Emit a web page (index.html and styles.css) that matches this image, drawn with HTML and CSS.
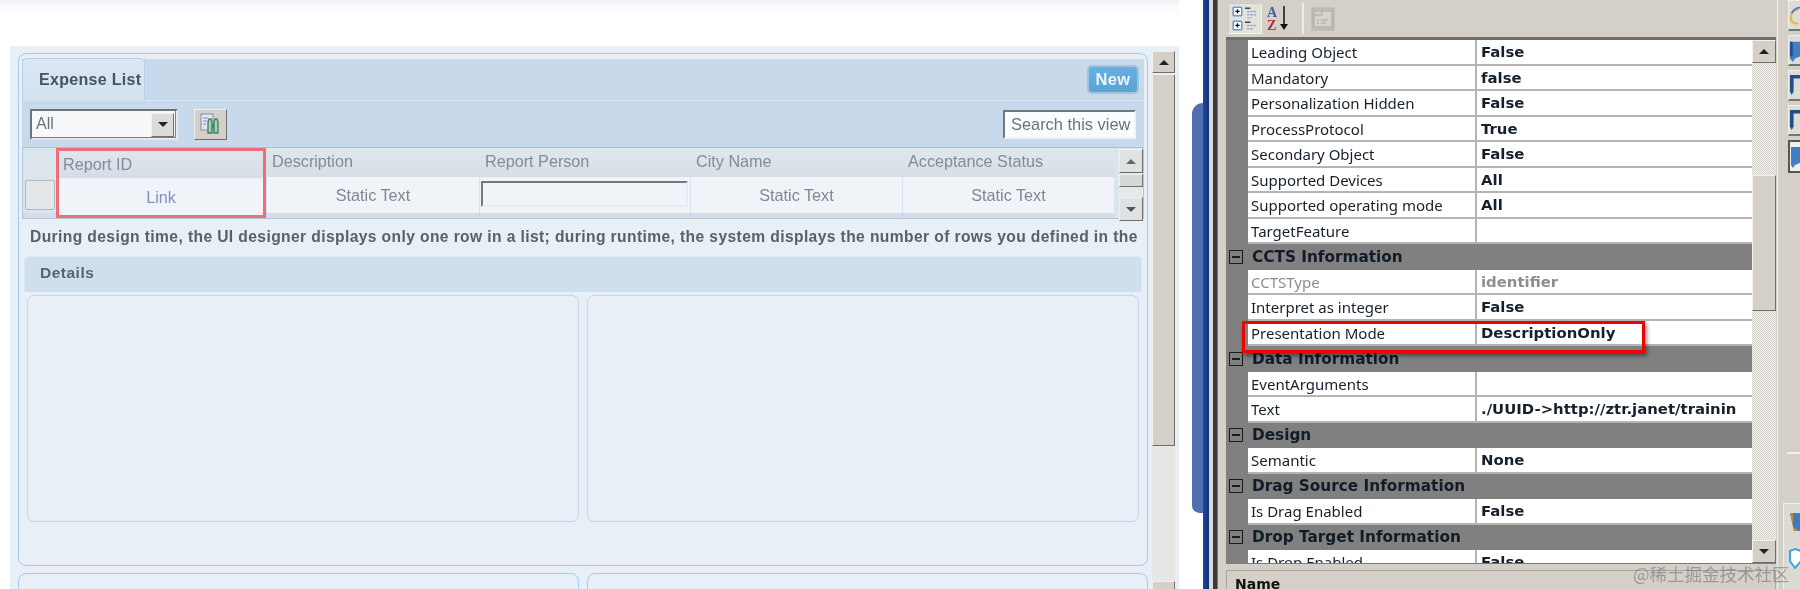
FILE: index.html
```html
<!DOCTYPE html>
<html lang="en">
<head>
<meta charset="utf-8">
<title>Expense List designer</title>
<link rel="stylesheet" href="styles.css">
</head>
<body>
<div class="app">
  <main class="left">
    <div class="canvas">
      <div class="forms">
        <section class="panel">
          <div class="head">
            <div class="tab">Expense List</div>
            <div class="new">New</div>
          </div>
          <div class="toolbar">
            <div class="select"><span class="select-value">All</span><span class="btn drop"><i class="tri-down"></i></span></div>
            <div class="btn find">
              <svg width="25" height="25" viewBox="0 0 25 25">
                <rect x="3" y="2" width="12" height="16" fill="#dfe7f2" stroke="#7f8ea3"/>
                <path d="M5 6h5M5 9h4M5 12h3" stroke="#6f93c4" stroke-width="1.2"/>
                <path d="M10 10l1-3h2l1 3v11h-4zM16 10l1-3h2l1 3v11h-4z" fill="#a9cdb6" stroke="#3d8062" stroke-width="1.3"/>
                <path d="M14 12h2v4h-2z" fill="#3d8062"/>
              </svg>
            </div>
            <div class="search">Search this view</div>
          </div>
          <div class="table">
            <div class="col col-row"><div class="th"></div><div class="td"><span class="rowbtn"></span></div><div class="tf"></div></div>
            <div class="col col-id"><div class="th">Report ID</div><div class="td link">Link</div></div>
            <div class="col col-d"><div class="th">Description</div><div class="td">Static Text</div><div class="tf"></div></div>
            <div class="col col-p"><div class="th">Report Person</div><div class="td"><span class="input"></span></div><div class="tf"></div></div>
            <div class="col col-c"><div class="th">City Name</div><div class="td">Static Text</div><div class="tf"></div></div>
            <div class="col col-a"><div class="th">Acceptance Status</div><div class="td">Static Text</div><div class="tf"></div></div>
            <div class="mini-scroll">
              <span class="btn mini"><i class="tri-up small"></i></span>
              <span class="btn mini-thumb"></span>
              <span class="mini-track"></span>
              <span class="btn mini"><i class="tri-down small"></i></span>
            </div>
          </div>
          <p class="note">During design time, the UI designer displays only one row in a list; during runtime, the system displays the number of rows you defined in the</p>
          <div class="details">Details</div>
          <div class="boxes"><div class="box"></div><div class="box"></div></div>
        </section>
        <div class="lower"><div class="lower-box"></div><div class="lower-box"></div></div>
      </div>
      <div class="vscroll">
        <span class="btn vbtn"><i class="tri-up"></i></span>
        <span class="btn vthumb"></span>
        <span class="vtrack"></span>
        <span class="btn vbtn"></span>
      </div>
    </div>
  </main>

  <div class="gutter"><div class="bluetab"></div></div>
  <div class="rail"></div>
  <div class="sash"></div>

  <aside class="props">
    <div class="props-bar">
      <div class="tool tool-on">
        <svg width="28" height="28" viewBox="0 0 26 26">
          <rect x="2" y="2" width="8" height="8" rx="1" fill="#fff" stroke="#5a9bd8" stroke-width="1.4"/>
          <rect x="2" y="15" width="8" height="8" rx="1" fill="#fff" stroke="#5a9bd8" stroke-width="1.4"/>
          <path d="M4 6h4M6 4v4M4 19h4M6 17v4" stroke="#111" stroke-width="1.2"/>
          <path d="M13 3h5M13 16h5" stroke="#444" stroke-width="1.3"/>
          <path d="M15 6h8M15 9h8M15 12h4M15 19h8M15 22h6" stroke="#8aa6cc" stroke-width="1.3" stroke-dasharray="2 1"/>
        </svg>
      </div>
      <div class="tool tool-az">
        <svg width="24" height="26" viewBox="0 0 24 26">
          <text x="1" y="11" class="az-a">A</text>
          <text x="1" y="24" class="az-z">Z</text>
          <path d="M18 0v20" stroke="#111" stroke-width="1.5"/>
          <path d="M14 18h8l-4 6z" fill="#111"/>
        </svg>
      </div>
      <div class="tool-sep"></div>
      <div class="tool tool-off">
        <svg width="24" height="24" viewBox="0 0 24 24">
          <rect x="1" y="1" width="22" height="22" fill="#c3c0b9" stroke="#b3b0a9"/>
          <rect x="3" y="4" width="18" height="16" fill="#d6d3cc" stroke="#a9a69f"/>
          <path d="M3 8h8v-4M6 13h2M10 13h7M6 16h2M10 16h5" stroke="#a9a69f" fill="none"/>
        </svg>
      </div>
    </div>
    <div class="grid-wrap">
      <div class="grid">
        <div class="row"><span class="k">Leading Object</span><span class="v">False</span></div>
        <div class="row"><span class="k">Mandatory</span><span class="v">false</span></div>
        <div class="row"><span class="k">Personalization Hidden</span><span class="v">False</span></div>
        <div class="row"><span class="k">ProcessProtocol</span><span class="v">True</span></div>
        <div class="row"><span class="k">Secondary Object</span><span class="v">False</span></div>
        <div class="row"><span class="k">Supported Devices</span><span class="v">All</span></div>
        <div class="row"><span class="k">Supported operating mode</span><span class="v">All</span></div>
        <div class="row"><span class="k">TargetFeature</span><span class="v"></span></div>
        <div class="sect"><i class="minus"></i>CCTS Information</div>
        <div class="row row-dim"><span class="k">CCTSType</span><span class="v">identifier</span></div>
        <div class="row"><span class="k">Interpret as integer</span><span class="v">False</span></div>
        <div class="row"><span class="k">Presentation Mode</span><span class="v">DescriptionOnly</span></div>
        <div class="sect"><i class="minus"></i>Data Information</div>
        <div class="row"><span class="k">EventArguments</span><span class="v"></span></div>
        <div class="row"><span class="k">Text</span><span class="v">./UUID-&gt;http://ztr.janet/trainin</span></div>
        <div class="sect"><i class="minus"></i>Design</div>
        <div class="row"><span class="k">Semantic</span><span class="v">None</span></div>
        <div class="sect"><i class="minus"></i>Drag Source Information</div>
        <div class="row"><span class="k">Is Drag Enabled</span><span class="v">False</span></div>
        <div class="sect"><i class="minus"></i>Drop Target Information</div>
        <div class="row"><span class="k">Is Drop Enabled</span><span class="v">False</span></div>
      </div>
      <div class="pscroll">
        <span class="btn pbtn"><i class="tri-up"></i></span>
        <span class="ptrack ptrack-a"></span>
        <span class="btn pthumb"></span>
        <span class="ptrack ptrack-b"></span>
        <span class="btn pbtn"><i class="tri-down"></i></span>
      </div>
      <div class="redbox"></div>
    </div>
    <div class="name-panel">Name</div>
  </aside>

  <div class="dock">
    <div class="dock-btn">
      <svg width="12" height="30" viewBox="0 0 12 30"><path d="M10 9C4 9 2 14 2 18s3 7 8 6" fill="none" stroke="#e8b93a" stroke-width="2.5"/><path d="M3 13c3-5 6-6 9-6" fill="none" stroke="#3a7fd0" stroke-width="2"/></svg>
    </div>
    <div class="dock-btn">
      <svg width="12" height="30" viewBox="0 0 12 30"><path d="M1 6h11v16l-5 2-3 4-3-4z" fill="#3f7fc6"/><path d="M1 6h3v16H1z" fill="#1f4f8f"/></svg>
    </div>
    <div class="dock-btn">
      <svg width="12" height="30" viewBox="0 0 12 30"><path d="M1 4h11v4H5v14l-2 4-2-4z" fill="#214f86"/></svg>
    </div>
    <div class="dock-btn">
      <svg width="12" height="30" viewBox="0 0 12 30"><path d="M1 4h11v4H5v14l-2 4-2-4z" fill="#214f86"/></svg>
    </div>
    <div class="dock-btn dock-on">
      <svg width="10" height="28" viewBox="0 0 10 28"><path d="M1 4h9v16l-5 2-2 3-2-3z" fill="#3f7fc6"/></svg>
    </div>
    <div class="dock-rule"></div>
    <div class="dock-lower">
      <svg width="12" height="22" viewBox="0 0 12 22"><path d="M1 3h11v18H5z" fill="#3d7cc4"/><path d="M1 3h3v14l6 4H5z" fill="#b98f3c"/></svg>
      <svg width="12" height="22" viewBox="0 0 12 22"><path d="M6 2l6 2v10l-6 7-5-7V4z" fill="#fff" stroke="#39a8e0" stroke-width="2"/></svg>
    </div>
  </div>

  <div class="watermark">@稀土掘金技术社区</div>
</div>
</body>
</html>
```

FILE: styles.css
```css
* { box-sizing: border-box; }
html, body { margin: 0; padding: 0; }
body { width: 1800px; height: 589px; overflow: hidden; background: #fff; font-family: "Liberation Sans", Arial, sans-serif; }
.app { position: relative; display: flex; width: 1800px; height: 589px; overflow: hidden; filter: blur(0.45px); }

/* left pane */
.left { width: 1179px; height: 589px; padding: 46px 0 0 10px; background: linear-gradient(#f1f2f6 0, #fafbfd 8px, #fff 16px); }
.canvas { display: flex; width: 1169px; height: 543px; padding: 5px 0 0 8px; background: #e8eff6; overflow: hidden; }
.forms { width: 1130px; margin-top: 2px; flex: none; }
.panel { width: 1130px; height: 513px; padding: 5px 3px 0; border: 1px solid #a9c9e8; border-radius: 8px; }

.head { display: flex; justify-content: space-between; height: 42px; padding-right: 4px; background: #c7d9ea; border-bottom: 1px solid #dbe7f2; }
.tab { width: 123px; height: 43px; margin-top: -1px; padding: 0 0 0 16px; border: 1px solid #b9d0e6; border-bottom: 0; border-radius: 5px 5px 0 0; background: linear-gradient(#dbe7f2, #d3e2ef); color: #46545f; font-size: 16px; font-weight: 700; letter-spacing: 0.3px; line-height: 42px; white-space: nowrap; }
.new { width: 52px; height: 29px; margin-top: 6px; margin-right: 1px; border: 2px solid #9fc4de; border-radius: 5px; background: linear-gradient(#68b0de, #58a4d4); color: #eaf5fc; font-size: 16.5px; font-weight: 700; letter-spacing: 0.4px; line-height: 24px; text-align: center; }

.toolbar { display: flex; align-items: center; height: 46px; padding: 0 8px; background: #c7d9ea; }
.select { display: flex; width: 148px; height: 31px; padding: 2px; border: 2px solid #6f7274; border-right-color: #e3e9ef; border-bottom-color: #e3e9ef; background: #f6f8fa; box-shadow: inset -1px -1px 0 #808080; }
.select-value { flex: 1; padding-left: 2px; color: #69727c; font-size: 16px; line-height: 22px; }
.btn { display: flex; align-items: center; justify-content: center; background: #d4d0c8; border: 1px solid; border-color: #f2f1ee #6e6e6c #6e6e6c #f2f1ee; }
.drop { width: 23px; height: 24px; background: #dcdcda; }
.find { width: 33px; height: 31px; margin-left: 16px; }
.search { width: 133px; height: 29px; margin-left: auto; padding-left: 6px; border: 2px solid #757779; border-right-color: #eef2f6; border-bottom-color: #eef2f6; background: #fbfcfd; color: #69727c; font-size: 16.4px; line-height: 24px; white-space: nowrap; overflow: hidden; }

.tri-down, .tri-up { display: block; width: 0; height: 0; border-left: 5px solid transparent; border-right: 5px solid transparent; }
.tri-down { border-top: 5px solid #222; }
.tri-up { border-bottom: 5px solid #222; }
.tri-down.small { border-top-color: #555; }
.tri-up.small { border-bottom-color: #666; }

.table { display: flex; height: 72px; padding-top: 1px; background: #dce4ec; border: 1px solid #b3c8dc; border-top-color: #a9c0d6; }
.col { display: flex; flex-direction: column; flex: none; }
.col-row { width: 33px; }
.col-id { width: 210px; border: 3px solid #ee6e78; margin-top: -1px; }
.col-d { width: 213px; }
.col-p { width: 211px; }
.col-c { width: 212px; }
.col-a { width: 212px; }
.th { height: 28px; padding-left: 6px; background: linear-gradient(#e0e6ec, #d6dfe7); color: #838b94; font-size: 16.2px; line-height: 25px; white-space: nowrap; }
.td { height: 36px; background: #f0f4f9; border-left: 1px solid #d7e1ec; color: #7f878f; font-size: 16.2px; line-height: 36px; text-align: center; }
.tf { flex: 1; background: #d5dee8; border-left: 1px solid #c8d5e3; }
.col-row .td { display: flex; align-items: center; padding-left: 2px; background: #dce4ec; border: 0; }
.col-row .th { background: #dce4ec; }
.rowbtn { width: 30px; height: 30px; background: #e3e7ea; border: 1px solid #aeb9c3; border-radius: 2px; }
.col-id .th { height: 27px; padding-left: 4px; background: linear-gradient(#e0e6ec, #d4dde6); line-height: 26px; }
.col-id .td { flex: 1; height: auto; border: 0; padding-top: 1px; }
.link { color: #8390c4 !important; }
.td .input { display: block; width: 207px; height: 26px; margin: 4px 0 0 1px; border: 2px solid #74787c; border-right-color: #e6edf4; border-bottom-color: #e6edf4; background: #f0f4f9; }

.mini-scroll { display: flex; flex-direction: column; width: 25px; margin-left: 5px; background: #dfe4ea; }
.mini { height: 24px; flex: none; background: #dfe1e2; }
.mini-thumb { height: 13px; flex: none; margin-top: 1px; background: #d6d8d8; }
.mini-track { height: 10px; flex: none; background: #e4e8ec; }
.mini-scroll .mini:last-child { height: 24px; }

.note { width: 1107px; height: 37px; margin: 0 0 0 8px; color: #5a6068; font-size: 15.6px; font-weight: 700; letter-spacing: 0.4px; line-height: 35px; white-space: nowrap; overflow: hidden; }
.details { height: 36px; margin: 0 2px; padding-left: 15px; border: 1px solid #dbe7f2; border-bottom: 0; border-radius: 5px 5px 0 0; background: #cfdfee; color: #56646f; font-size: 15.5px; font-weight: 700; letter-spacing: 0.5px; line-height: 31px; }
.boxes { display: flex; gap: 8px; margin: 3px 5px 0; }
.box { flex: 1; height: 227px; border: 1px solid #c0d7ed; border-radius: 7px; }
.lower { display: flex; gap: 8px; margin-top: 7px; }
.lower-box { flex: 1; height: 60px; border: 1px solid #a9c9e8; border-radius: 8px; }

.vscroll { display: flex; flex-direction: column; width: 23px; height: 560px; margin-left: 4px; flex: none; }
.vbtn { height: 22px; flex: none; }
.vthumb { height: 371px; flex: none; margin-top: 2px; border-top: 0; }
.vtrack { height: 135px; flex: none; background: #e6e6e4; }

/* splitter */
.gutter { width: 24px; flex: none; padding: 103px 0 0 13px; background: #fff; }
.bluetab { width: 11px; height: 410px; border-radius: 12px 0 0 8px; background: #4f6fb0; }
.rail { width: 6px; flex: none; margin-left: 0; background: linear-gradient(90deg, #1f4a96, #0f2f7c); }
.sash { width: 9px; flex: none; background: linear-gradient(90deg, #dcdad4 0 4px, #3a3a3a 4px 8px, #777 8px); }

/* properties */
.props { width: 559px; height: 589px; flex: none; padding-left: 8px; background: #d4d0c8; font-family: "Noto Sans", sans-serif; }
.props-bar { display: flex; align-items: flex-start; width: 550px; height: 37px; padding: 3px 0 0 2px; }
.tool { display: flex; align-items: center; justify-content: center; height: 31px; }
.tool-on { width: 34px; background: #e4e2dc; border: 1px solid; border-color: #cfcbc3 #f4f3f0 #f4f3f0 #cfcbc3; }
.tool-az { width: 26px; margin-left: 3px; }
.az-a { font: 700 14px "Liberation Serif", serif; fill: #3a62b4; }
.az-z { font: 700 14px "Liberation Serif", serif; fill: #a8323c; }
.tool-sep { width: 2px; height: 31px; margin-left: 11px; background: #ecebe6; }
.tool-off { width: 26px; margin-left: 6px; }

.grid-wrap { position: relative; display: flex; width: 550px; height: 527px; border-top: 3px solid #6e6e6e; border-bottom: 1px solid #7a7a7a; background: #808080; }
.grid { width: 526px; height: 523px; flex: none; overflow: hidden; }
.row { display: flex; height: 25.5px; padding-left: 22px; font-size: 15px; line-height: 24px; color: #16202c; }
.k { width: 229px; flex: none; padding-left: 3px; background: #fff; border-right: 2px solid #b4b4b4; border-bottom: 2px solid #b4b4b4; white-space: nowrap; overflow: hidden; }
.v { flex: 1; min-width: 0; padding-left: 4px; background: #fff; border-bottom: 2px solid #b4b4b4; font-family: "DejaVu Sans", sans-serif; font-weight: 700; font-size: 14.9px; line-height: 25px; white-space: nowrap; overflow: hidden; }
.row-dim { color: #8e8e8e; }
.sect { display: flex; align-items: center; height: 25.5px; padding-left: 3px; background: #808080; color: #111c28; font-family: "DejaVu Sans", sans-serif; font-size: 15.3px; font-weight: 700; white-space: nowrap; }
.minus { position: relative; display: block; width: 14px; height: 14px; margin-right: 9px; border: 1px solid #1a1a1a; }
.minus::after { content: ""; position: absolute; left: 2px; right: 2px; top: 5px; height: 2px; background: #1a1a1a; }

.pscroll { display: flex; flex-direction: column; width: 24px; flex: none; }
.pbtn { height: 23px; flex: none; }
.pthumb { height: 136px; flex: none; }
.ptrack { flex: none; background-color: #efeeea; background-image: conic-gradient(#d4d0c8 25%, #f4f3f0 0 50%, #d4d0c8 0 75%, #f4f3f0 0); background-size: 2px 2px; }
.ptrack-a { height: 112px; }
.ptrack-b { height: 229px; }
.redbox { position: absolute; left: 16px; top: 281px; width: 403px; height: 32px; border: 3px solid #f00000; box-shadow: 2px 3px 4px rgba(0,0,0,.45); }

.name-panel { width: 550px; height: 25px; margin-top: 6px; padding-left: 8px; border: 1px solid #a9a69f; border-bottom: 0; color: #111; font-family: "DejaVu Sans", sans-serif; font-size: 14px; font-weight: 700; line-height: 26px; }

/* right dock */
.dock { display: flex; flex-direction: column; align-items: flex-end; width: 23px; flex: none; background: #d4d0c8; border-left: 1px solid #f0efeb; }
.dock-btn { display: flex; flex: none; align-items: center; justify-content: flex-end; width: 12px; height: 31px; margin-bottom: 4px; background: #dedcd6; border-top: 1px solid #f0efeb; border-left: 1px solid #f0efeb; border-bottom: 2px solid #77756f; overflow: hidden; }
.dock-on { height: 33px; border: 2px solid #555; border-right: 0; background: #f0efeb; }
.dock-rule { flex: none; width: 13px; height: 2px; margin-top: 275px; background: #f0efeb; }
.dock-lower { display: flex; flex-direction: column; flex: none; gap: 15px; width: 17px; height: 86px; margin-top: 49px; padding: 6px 0 0 5px; background: #dcdad4; border-left: 1px solid #f0efeb; border-top: 1px solid #f0efeb; }

.watermark { position: absolute; left: 1633px; top: 562px; color: rgba(120,120,120,.62); font-family: "Noto Sans CJK SC", sans-serif; font-size: 17.5px; line-height: 24px; white-space: nowrap; }
```
